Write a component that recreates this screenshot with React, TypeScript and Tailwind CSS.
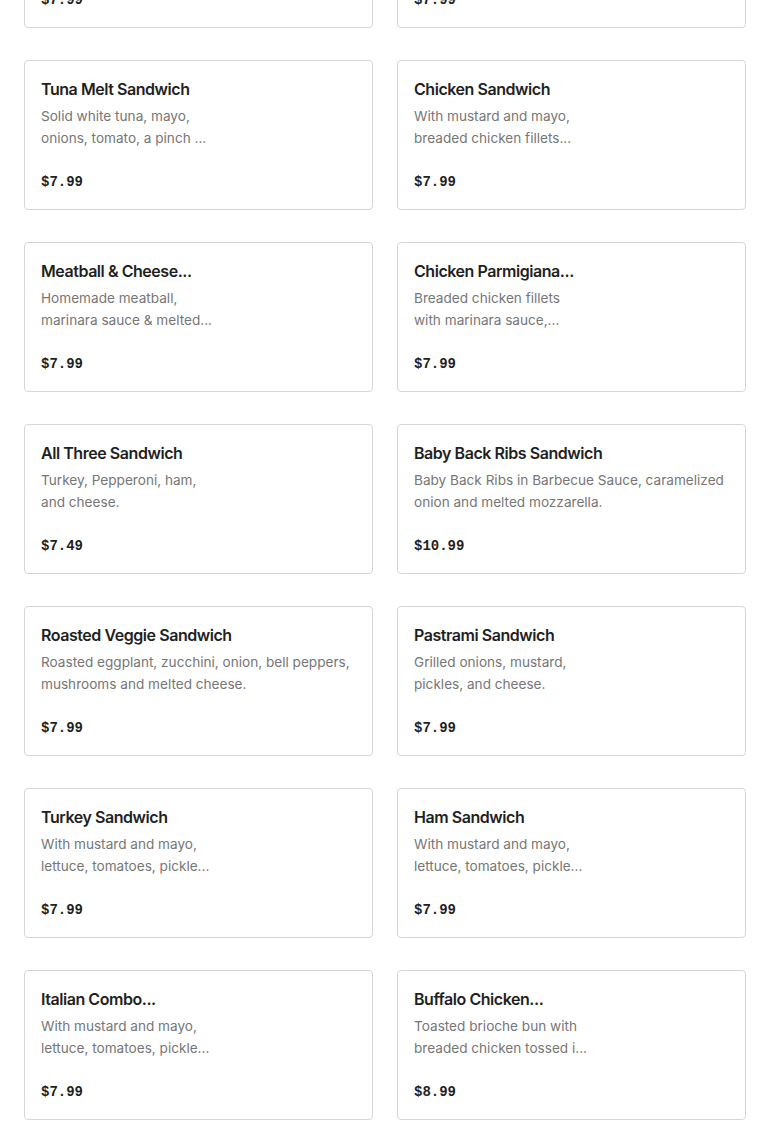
import React from 'react';

type Item = { name: string; lines: string[]; price: string };

const items: Item[] = [
    { name: 'BLT Sandwich', lines: ['Bacon, lettuce, tomato', 'and mayo.'], price: '$7.99' },
    { name: 'Grilled Cheese Sandwich', lines: ['American cheese on', 'toasted bread.'], price: '$7.99' },
    { name: 'Tuna Melt Sandwich', lines: ['Solid white tuna, mayo,', 'onions, tomato, a pinch ...'], price: '$7.99' },
    { name: 'Chicken Sandwich', lines: ['With mustard and mayo,', 'breaded chicken fillets...'], price: '$7.99' },
    { name: 'Meatball & Cheese...', lines: ['Homemade meatball,', 'marinara sauce & melted...'], price: '$7.99' },
    { name: 'Chicken Parmigiana...', lines: ['Breaded chicken fillets', 'with marinara sauce,...'], price: '$7.99' },
    { name: 'All Three Sandwich', lines: ['Turkey, Pepperoni, ham,', 'and cheese.'], price: '$7.49' },
    { name: 'Baby Back Ribs Sandwich', lines: ['Baby Back Ribs in Barbecue Sauce, caramelized', 'onion and melted mozzarella.'], price: '$10.99' },
    { name: 'Roasted Veggie Sandwich', lines: ['Roasted eggplant, zucchini, onion, bell peppers,', 'mushrooms and melted cheese.'], price: '$7.99' },
    { name: 'Pastrami Sandwich', lines: ['Grilled onions, mustard,', 'pickles, and cheese.'], price: '$7.99' },
    { name: 'Turkey Sandwich', lines: ['With mustard and mayo,', 'lettuce, tomatoes, pickle...'], price: '$7.99' },
    { name: 'Ham Sandwich', lines: ['With mustard and mayo,', 'lettuce, tomatoes, pickle...'], price: '$7.99' },
    { name: 'Italian Combo...', lines: ['With mustard and mayo,', 'lettuce, tomatoes, pickle...'], price: '$7.99' },
    { name: 'Buffalo Chicken...', lines: ['Toasted brioche bun with', 'breaded chicken tossed i...'], price: '$8.99' },
];

const MenuCard: React.FC<{ item: Item }> = ({ item }) => (
    <div className="border border-[#d6d6d6] rounded-[4px] bg-white px-4 pt-4 pb-[15px] h-[150px] flex flex-col">
        <h3 className="text-[16px] leading-6 font-semibold text-[#1f1f1f] tracking-[-0.45px] whitespace-nowrap">{item.name}</h3>
        <p className="mt-1 text-[13.6px] leading-[22px] text-[#767676]">
            {item.lines.map((l, i) => (
                <span key={i} className="block whitespace-nowrap">{l}</span>
            ))}
        </p>
        <p className="mt-[21px] text-[14px] leading-6 font-bold text-[#1f1f1f] font-['Liberation_Mono',monospace]">{item.price}</p>
    </div>
);

export default function App() {
    return (
        <div className="bg-white h-[1132px] overflow-hidden font-['Inter','Liberation_Sans',sans-serif]">
            <div className="px-6 -mt-[122px] grid grid-cols-2 gap-x-6 gap-y-8">
                {items.map((item, i) => (
                    <MenuCard key={i} item={item} />
                ))}
            </div>
        </div>
    );
}
